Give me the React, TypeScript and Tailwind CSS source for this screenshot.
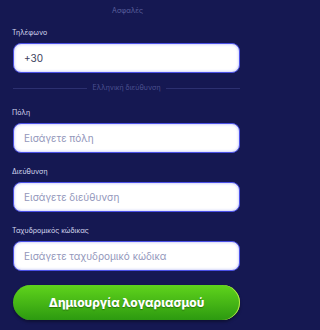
const fields = [
  { label: "Πόλη", placeholder: "Εισάγετε πόλη" },
  { label: "Διεύθυνση", placeholder: "Εισάγετε διεύθυνση" },
  { label: "Ταχυδρομικός κώδικας", placeholder: "Εισάγετε ταχυδρομικό κώδικα" },
];

function Field({ label, placeholder, value }: { label: string; placeholder?: string; value?: string }) {
  return (
    <div className="flex flex-col">
      <label className="ml-[-1px] text-[7px] leading-[10px] text-[#d6d8f0]">{label}</label>
      <input
        readOnly
        value={value}
        placeholder={placeholder}
        className="mt-[5px] h-[30px] w-full rounded-[8px] border border-[#4a50e6] bg-white px-[10px] text-[10px] text-[#3b3e5c] placeholder:text-[#9397bb] shadow-[inset_0_0_3px_rgba(74,80,230,0.45)] outline-none"
      />
    </div>
  );
}

export default function App() {
  return (
    <div
      className="min-h-[330px] w-full overflow-hidden bg-[#151852]"
      style={{ fontFamily: "Inter, 'Noto Sans', sans-serif" }}
    >
      <div className="ml-[13px] w-[227px]">
        <p className="ml-[2px] pt-[6px] text-center text-[7px] leading-[10px] text-[#5c619e]">Ασφαλές</p>

        <div className="mt-[12px]">
          <Field label="Τηλέφωνο" value="+30" />
        </div>

        {/* divider */}
        <div className="mt-[10px] flex h-[10px] items-center gap-[5px]">
          <div className="h-px flex-1 bg-[#2c3070]" />
          <span className="text-[7px] text-[#4c5190]">Ελληνική διεύθυνση</span>
          <div className="h-px flex-1 bg-[#2c3070]" />
        </div>

        <div className="mt-[15px] flex flex-col gap-[14px]">
          {fields.map((f) => (
            <Field key={f.label} label={f.label} placeholder={f.placeholder} />
          ))}
        </div>

        <button className="mt-[14px] h-[35px] w-full rounded-full bg-gradient-to-b from-[#5fd41c] to-[#2c9a10] text-[12px] font-extrabold text-white shadow-[inset_-1px_0_0_#b7e84a,0_2px_3px_rgba(0,0,0,0.35)] [text-shadow:0_1px_1px_rgba(0,0,0,0.35)]">
          Δημιουργία λογαριασμού
        </button>
      </div>
    </div>
  );
}
